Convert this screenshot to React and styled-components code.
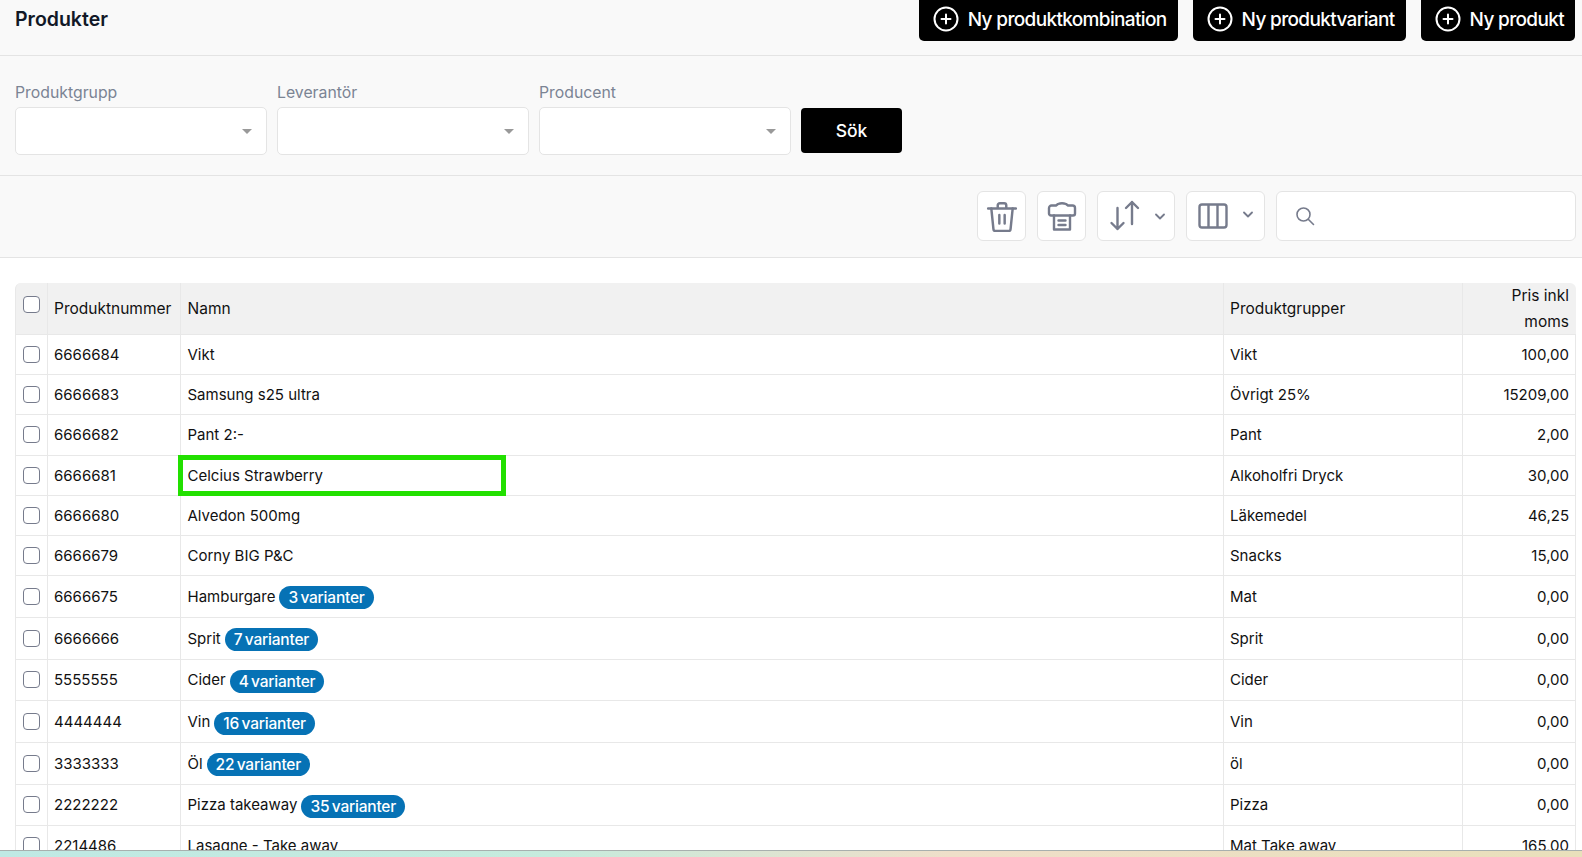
import React from 'react';
import styled, { createGlobalStyle } from 'styled-components';

const products = [
  { nr: '6666684', name: 'Vikt', group: 'Vikt', price: '100,00' },
  { nr: '6666683', name: 'Samsung s25 ultra', group: 'Övrigt 25%', price: '15209,00' },
  { nr: '6666682', name: 'Pant 2:-', group: 'Pant', price: '2,00' },
  { nr: '6666681', name: 'Celcius Strawberry', group: 'Alkoholfri Dryck', price: '30,00', marked: true },
  { nr: '6666680', name: 'Alvedon 500mg', group: 'Läkemedel', price: '46,25' },
  { nr: '6666679', name: 'Corny BIG P&C', group: 'Snacks', price: '15,00' },
  { nr: '6666675', name: 'Hamburgare', variants: 3, group: 'Mat', price: '0,00' },
  { nr: '6666666', name: 'Sprit', variants: 7, group: 'Sprit', price: '0,00' },
  { nr: '5555555', name: 'Cider', variants: 4, group: 'Cider', price: '0,00' },
  { nr: '4444444', name: 'Vin', variants: 16, group: 'Vin', price: '0,00' },
  { nr: '3333333', name: 'Öl', variants: 22, group: 'öl', price: '0,00' },
  { nr: '2222222', name: 'Pizza takeaway', variants: 35, group: 'Pizza', price: '0,00' },
  { nr: '2214486', name: 'Lasagne - Take away', group: 'Mat Take away', price: '165,00' },
];

const PlusIcon = () => (
  <svg width="26" height="26" viewBox="0 0 26 26" fill="none" stroke="#fff" strokeWidth="2" strokeLinecap="round">
    <circle cx="13" cy="13" r="11.5" />
    <path d="M13 8.5v9M8.5 13h9" />
  </svg>
);

const TrashIcon = () => (
  <svg width="32" height="32" viewBox="0 0 30 30" fill="none" stroke="#767b8c" strokeWidth="2.3" strokeLinecap="round" strokeLinejoin="round">
    <path d="M2 8h26M11 8V5a2 2 0 0 1 2-2h4a2 2 0 0 1 2 2v3" />
    <path d="M5 8l2 19.500a1.500 1.500 0 0 0 1.500 1.500h13a1.500 1.500 0 0 0 1.500-1.500L25 8" />
    <path d="M12.500 14v8M17.500 14v8" />
  </svg>
);

const ArchiveIcon = () => (
  <svg width="30" height="30" viewBox="0 0 30 30" fill="none" stroke="#767b8c" strokeWidth="2.4" strokeLinecap="round" strokeLinejoin="round">
    <path d="M4 14.500a2 2 0 0 1-2-2V7a2.500 2.500 0 0 1 2.500-2.500H9L11 3c2.500-1 5.500-1 8 0l2 1.500h4.500A2.500 2.500 0 0 1 28 7v5.500a2 2 0 0 1-2 2z" />
    <path d="M7 14.500V28.500h16V14.500" />
    <path d="M11.500 19.500h7M11.500 24h7" />
  </svg>
);

const SortIcon = () => (
  <svg width="32" height="32" viewBox="0 0 32 32" fill="none" stroke="#767b8c" strokeWidth="2.4" strokeLinecap="round" strokeLinejoin="round">
    <path d="M8.500 8v21M2.500 23l6 6 6-6" />
    <path d="M23 24V2M17 8l6-6 6 6" />
  </svg>
);

const ColumnsIcon = () => (
  <svg width="30" height="26" viewBox="0 0 30 26" fill="none" stroke="#767b8c" strokeWidth="2.4" strokeLinejoin="round">
    <rect x="1.500" y="1.500" width="27" height="23" rx="2.500" />
    <path d="M10.500 1.500v23M19.500 1.500v23" />
  </svg>
);

const ChevronIcon = ({ $lift }) => (
  <ChevronSvg $lift={$lift} width="10" height="7" viewBox="0 0 10 7" fill="none" stroke="#767b8c" strokeWidth="1.8" strokeLinecap="round" strokeLinejoin="round">
    <path d="M1 1.500l4 4 4-4" />
  </ChevronSvg>
);

const SearchIcon = () => (
  <svg width="20" height="20" viewBox="0 0 20 20" fill="none" stroke="#767b8c" strokeWidth="1.6" strokeLinecap="round">
    <circle cx="8.500" cy="8.500" r="6.500" />
    <path d="M13.500 13.500l5 5" />
  </svg>
);

const App = () => {
  return (
    <>
      <GlobalStyle />
      <Page>
        <Scroll>
          <TopBar>
            <Title>Produkter</Title>
            <TopActions>
              <NewButton><PlusIcon />Ny produktkombination</NewButton>
              <NewButton><PlusIcon />Ny produktvariant</NewButton>
              <NewButton><PlusIcon />Ny produkt</NewButton>
            </TopActions>
          </TopBar>

          <Filters>
            <Field>
              <FieldLabel>Produktgrupp</FieldLabel>
              <Select><Caret /></Select>
            </Field>
            <Field>
              <FieldLabel>Leverantör</FieldLabel>
              <Select><Caret /></Select>
            </Field>
            <Field>
              <FieldLabel>Producent</FieldLabel>
              <Select><Caret /></Select>
            </Field>
            <SearchButton>Sök</SearchButton>
          </Filters>

          <Toolbar>
            <IconButton><TrashIcon /></IconButton>
            <IconButton><ArchiveIcon /></IconButton>
            <MenuButton $width={78} $padRight={9}><SortIcon /><ChevronIcon /></MenuButton>
            <MenuButton $width={79} $padRight={11}><ColumnsIcon /><ChevronIcon $lift /></MenuButton>
            <SearchBox><SearchIcon /></SearchBox>
          </Toolbar>

          <TableWrap>
            <Table>
              <colgroup>
                <col style={{ width: 33 }} />
                <col style={{ width: 133 }} />
                <col />
                <col style={{ width: 239 }} />
                <col style={{ width: 113 }} />
              </colgroup>
              <thead>
                <tr>
                  <Th $check><Check $up /></Th>
                  <Th>Produktnummer</Th>
                  <Th $name>Namn</Th>
                  <Th>Produktgrupper</Th>
                  <Th $right>Pris inkl moms</Th>
                </tr>
              </thead>
              <tbody>
                {products.map((p) => (
                  <Row key={p.nr} $tall={!!p.variants}>
                    <Td $check><Check /></Td>
                    <Td>{p.nr}</Td>
                    <Td $name>
                      <NameWrap>
                        {p.name}
                        {p.variants && <Badge>{p.variants} varianter</Badge>}
                      </NameWrap>
                      {p.marked && <Marker />}
                    </Td>
                    <Td>{p.group}</Td>
                    <Td $right>{p.price}</Td>
                  </Row>
                ))}
              </tbody>
            </Table>
          </TableWrap>
        </Scroll>
        <BottomStrip />
      </Page>
    </>
  );
};

export default App;

const GlobalStyle = createGlobalStyle`
  html, body {
    margin: 0;
    padding: 0;
    height: 100%;
    background: #fff;
  }
  body {
    font-family: Inter, "Liberation Sans", sans-serif;
    color: #111;
  }
  * {
    box-sizing: border-box;
  }
`;

const Page = styled.div`
  height: 100vh;
  display: flex;
  flex-direction: column;
  overflow: hidden;
`;

const Scroll = styled.div`
  flex: 1;
  min-height: 0;
  overflow: hidden;
`;

const TopBar = styled.div`
  height: 56px;
  padding: 0 7px 0 15px;
  display: flex;
  align-items: flex-start;
  justify-content: space-between;
  background: #f9f9f9;
  border-bottom: 1px solid #e4e4e4;
`;

const Title = styled.h1`
  margin: 8px 0 0;
  font-size: 19.500px;
  line-height: 22px;
  font-weight: 600;
  color: #111827;
`;

const TopActions = styled.div`
  display: flex;
  gap: 15px;
`;

const NewButton = styled.button`
  height: 41px;
  padding: 0 11px 3px 14px;
  display: flex;
  align-items: center;
  gap: 9px;
  border: 0;
  border-radius: 0 0 5px 5px;
  background: #000;
  color: #fff;
  font-family: inherit;
  font-size: 19px;
  font-weight: 500;
  letter-spacing: -0.65px;
  white-space: nowrap;
`;

const Filters = styled.div`
  height: 120px;
  padding: 0 0 20px 15px;
  display: flex;
  align-items: flex-end;
  gap: 10px;
  background: #f9f9f9;
  border-bottom: 1px solid #e4e4e4;
`;

const Field = styled.div`
  width: 252px;
  display: flex;
  flex-direction: column;
  gap: 4px;
`;

const FieldLabel = styled.label`
  font-size: 15.800px;
  line-height: 20px;
  color: #7b8494;
`;

const Select = styled.div`
  position: relative;
  height: 48px;
  background: #fff;
  border: 1px solid #e4e4e4;
  border-radius: 5px;
`;

const Caret = styled.span`
  position: absolute;
  right: 14px;
  top: 21px;
  border-left: 5px solid transparent;
  border-right: 5px solid transparent;
  border-top: 5px solid #999;
`;

const SearchButton = styled.button`
  width: 101px;
  height: 45px;
  margin-bottom: 2px;
  border: 0;
  border-radius: 4px;
  background: #000;
  color: #fff;
  font-family: inherit;
  font-size: 17.500px;
  font-weight: 500;
`;

const Toolbar = styled.div`
  height: 82px;
  padding: 15px 6px 0 0;
  display: flex;
  justify-content: flex-end;
  align-items: flex-start;
  gap: 11px;
  background: #f9f9f9;
  border-bottom: 1px solid #e4e4e4;
`;

const IconButton = styled.button`
  width: 49px;
  height: 50px;
  padding: 0;
  display: flex;
  align-items: center;
  justify-content: center;
  background: #fff;
  border: 1px solid #e4e4e4;
  border-radius: 6px;
`;

const MenuButton = styled(IconButton)`
  width: ${(p) => p.$width}px;
  padding: 0 ${(p) => p.$padRight}px 0 11px;
  justify-content: space-between;
`;

const ChevronSvg = styled.svg`
  margin-top: ${(p) => (p.$lift ? '-4px' : '0')};
`;

const SearchBox = styled.div`
  width: 300px;
  height: 50px;
  padding-left: 18px;
  display: flex;
  align-items: center;
  background: #fff;
  border: 1px solid #e4e4e4;
  border-radius: 6px;
`;

const TableWrap = styled.div`
  padding: 25px 6px 0 15px;
  background: #fff;
`;

const Table = styled.table`
  width: 100%;
  table-layout: fixed;
  border-collapse: separate;
  border-spacing: 0;
  font-size: 15px;
`;

const Th = styled.th`
  height: 50px;
  padding: ${(p) => (p.$check ? '0' : p.$name ? '0 6px 0 6.5px' : p.$right ? '0 7px 0 6px' : '0 6px')};
  background: #f1f1f1;
  border-right: 1px solid #e8e8e8;
  border-bottom: 1px solid #e8e8e8;
  font-size: 15.500px;
  font-weight: 400;
  line-height: 25.500px;
  color: #111;
  text-align: ${(p) => (p.$check ? 'center' : p.$right ? 'right' : 'left')};

  &:first-child {
    border-top-left-radius: 6px;
    border-left: 1px solid #e8e8e8;
  }
  &:last-child {
    border-top-right-radius: 6px;
    border-right: 0;
  }
`;

const Row = styled.tr`
  height: ${(p) => (p.$tall ? 41.7 : 40.2)}px;
`;

const Td = styled.td`
  position: ${(p) => (p.$name ? 'relative' : 'static')};
  padding: ${(p) => (p.$check ? '0' : p.$name ? '0 6px 0 6.5px' : '0 6px')};
  background: #fff;
  border-right: 1px solid #e8e8e8;
  border-bottom: 1px solid #e8e8e8;
  text-align: ${(p) => (p.$check ? 'center' : p.$right ? 'right' : 'left')};
  white-space: nowrap;

  &:first-child {
    border-left: 1px solid #e8e8e8;
  }
`;

const NameWrap = styled.div`
  display: flex;
  align-items: center;
  gap: 4px;
`;

const Check = styled.span`
  display: block;
  width: 17px;
  height: 17px;
  margin: ${(p) => (p.$up ? '-8px auto 0' : '0 auto')};
  background: #fff;
  border: 1px solid #767b8c;
  border-radius: 4px;
`;

const Badge = styled.span`
  display: block;
  margin-top: 3px;
  padding: 0 9px;
  height: 23px;
  line-height: 23px;
  background: #0672b5;
  color: #fff;
  border-radius: 12px;
  font-size: 15.500px;
  font-weight: 500;
  letter-spacing: -0.2px;
  word-spacing: -1.500px;
`;

const Marker = styled.span`
  position: absolute;
  left: -3px;
  top: -1px;
  width: 328px;
  height: 41px;
  border: 5px solid #22e000;
`;

const BottomStrip = styled.div`
  height: 7px;
  flex-shrink: 0;
  border-top: 1px solid #a8b0ae;
  background: linear-gradient(90deg, #bfe9e4 0%, #c6ebdd 35%, #efdfc9 60%, #e9e0bb 100%);
`;
